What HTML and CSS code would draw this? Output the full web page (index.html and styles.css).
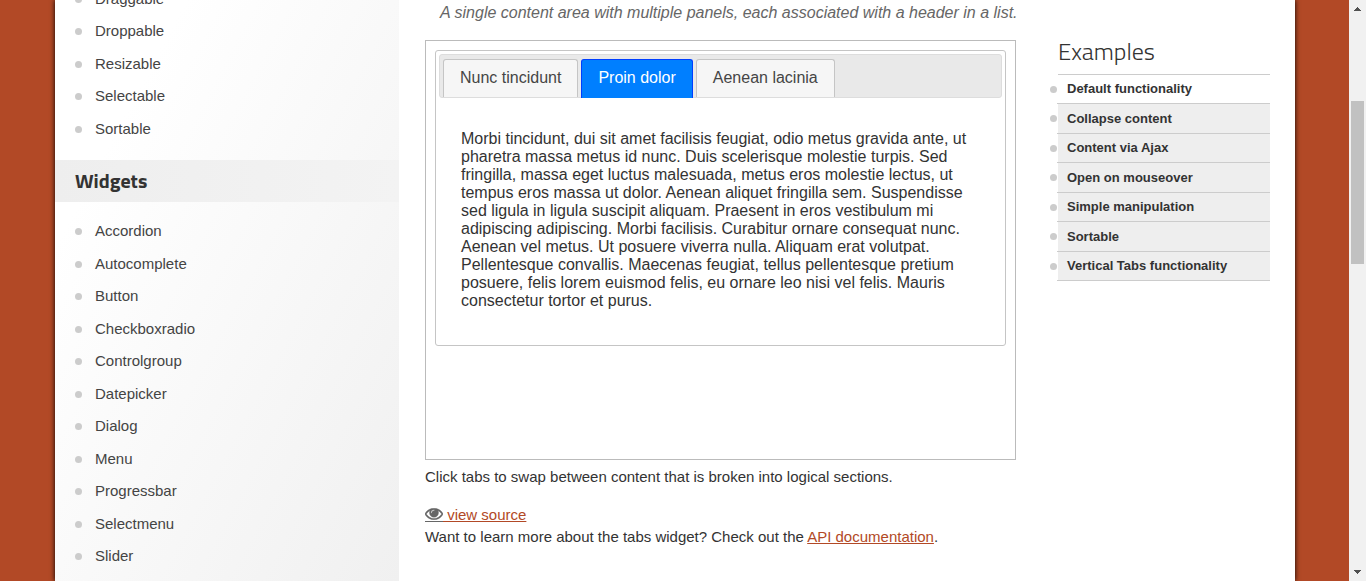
FILE: index.html
```html
<!DOCTYPE html>
<html lang="en">
<head>
<meta charset="utf-8">
<title>Tabs | jQuery UI</title>
<link rel="stylesheet" href="styles.css">
</head>
<body>
<div class="viewport">
  <div class="page">
    <nav class="sidebar" aria-label="Widgets and interactions">
      <ul class="menu menu-first">
        <li><a href="#">Draggable</a></li>
        <li><a href="#">Droppable</a></li>
        <li><a href="#">Resizable</a></li>
        <li><a href="#">Selectable</a></li>
        <li><a href="#">Sortable</a></li>
      </ul>
      <h3 class="menu-title">Widgets</h3>
      <ul class="menu">
        <li><a href="#">Accordion</a></li>
        <li><a href="#">Autocomplete</a></li>
        <li><a href="#">Button</a></li>
        <li><a href="#">Checkboxradio</a></li>
        <li><a href="#">Controlgroup</a></li>
        <li><a href="#">Datepicker</a></li>
        <li><a href="#">Dialog</a></li>
        <li><a href="#">Menu</a></li>
        <li><a href="#">Progressbar</a></li>
        <li><a href="#">Selectmenu</a></li>
        <li><a href="#">Slider</a></li>
      </ul>
    </nav>
    <div class="content">
      <main class="main">
        <p class="intro">A single content area with multiple panels, each associated with a header in a list.</p>
        <div class="demo">
          <div class="tabs">
            <div class="tab-list" role="tablist">
              <a class="tab" role="tab" href="#tab-1">Nunc tincidunt</a>
              <a class="tab tab-active" role="tab" aria-selected="true" href="#tab-2">Proin dolor</a>
              <a class="tab" role="tab" href="#tab-3">Aenean lacinia</a>
            </div>
            <div class="panel" role="tabpanel">
              <p>Morbi tincidunt, dui sit amet facilisis feugiat, odio metus gravida ante, ut pharetra massa metus id nunc. Duis scelerisque molestie turpis. Sed fringilla, massa eget luctus malesuada, metus eros molestie lectus, ut tempus eros massa ut dolor. Aenean aliquet fringilla sem. Suspendisse sed ligula in ligula suscipit aliquam. Praesent in eros vestibulum mi adipiscing adipiscing. Morbi facilisis. Curabitur ornare consequat nunc. Aenean vel metus. Ut posuere viverra nulla. Aliquam erat volutpat. Pellentesque convallis. Maecenas feugiat, tellus pellentesque pretium posuere, felis lorem euismod felis, eu ornare leo nisi vel felis. Mauris consectetur tortor et purus.</p>
            </div>
          </div>
        </div>
        <p class="description">Click tabs to swap between content that is broken into logical sections.</p>
        <div class="source"><a href="#"><span class="eye"><svg viewBox="0 384 1792 1152" aria-hidden="true"><path d="M1664 960q-152-236-381-353 61 104 61 225 0 185-131.500 316.500t-316.500 131.500-316.500-131.500-131.500-316.500q0-121 61-225-229 117-381 353 133 205 333.500 326.500t434.500 121.500 434.500-121.500 333.500-326.500zm-720-384q0-20-14-34t-34-14q-125 0-214.500 89.500t-89.500 214.500q0 20 14 34t34 14 34-14 14-34q0-86 61-147t147-61q20 0 34-14t14-34zm848 384q0 34-20 69-140 230-376.500 368.500t-499.500 138.500-499.500-139-376.500-368q-20-35-20-69t20-69q140-229 376.500-368t499.500-139 499.500 139 376.500 368q20 35 20 69z"/></svg></span> view source</a></div>
        <p class="more">Want to learn more about the tabs widget? Check out the <a href="#">API documentation</a>.</p>
      </main>
      <aside class="examples">
        <h2>Examples</h2>
        <ul>
          <li class="current"><a href="#">Default functionality</a></li>
          <li><a href="#">Collapse content</a></li>
          <li><a href="#">Content via Ajax</a></li>
          <li><a href="#">Open on mouseover</a></li>
          <li><a href="#">Simple manipulation</a></li>
          <li><a href="#">Sortable</a></li>
          <li><a href="#">Vertical Tabs functionality</a></li>
        </ul>
      </aside>
    </div>
  </div>
</div>
<div class="scrollbar" aria-hidden="true">
  <svg class="arrow" viewBox="0 0 17 17"><path d="M5 11h7v-1h-1v-1h-1v-1h-1v-1h-1v1h-1v1h-1v1h-1z"/></svg>
  <div class="track"><div class="thumb"></div></div>
  <svg class="arrow" viewBox="0 0 17 17"><path d="M5 6h7v1h-1v1h-1v1h-1v1h-1v-1h-1v-1h-1v-1h-1z"/></svg>
</div>
</body>
</html>
```
FILE: styles.css
```css
* {
  box-sizing: border-box;
}

body {
  margin: 0;
  display: flex;
  height: 100vh;
  overflow: hidden;
  background: #b24926;
  color: #333;
  font: 15px/22px "Liberation Sans", Arial, sans-serif;
}

p, ul, h2, h3 {
  margin: 0;
  padding: 0;
}

ul {
  list-style: none;
}

a {
  color: #b24926;
}

.viewport {
  flex: 1;
  min-width: 0;
  overflow: hidden;
  padding: 0 54px 0 55px;
}

.page {
  display: flex;
  min-height: 100%;
  max-width: 1240px;
  margin: 0 auto;
  background: #fff;
  box-shadow: 0 0 5px #000;
}

/* Sidebar */
.sidebar {
  width: 344px;
  flex: none;
  height: 100vh;
  overflow: hidden;
  background: linear-gradient(118deg, #fff 20%, #f0f0f0);
}

.menu {
  padding: 13px 20px;
}

.menu-first {
  margin-top: -18px;
  padding: 0 20px 15px;
}

.menu li {
  display: flex;
  align-items: center;
  gap: 13px;
  height: 33px;
}

.menu li:nth-child(odd),
.menu-first li:nth-child(even) {
  height: 32px;
}

.menu-first li:nth-child(odd) {
  height: 33px;
}

.menu li::before,
.examples li::before {
  content: "";
  flex: none;
  width: 7px;
  height: 7px;
  margin-top: 1px;
  border-radius: 50%;
  background: #ccc;
}

.menu a {
  color: #444;
  text-decoration: none;
}

.menu-title {
  padding: 0 20px;
  background: linear-gradient(90deg, #eee, #f3f3f3);
  color: #333;
  font: bold 20px/42px "Titillium Web", Roboto, sans-serif;
}

/* Content */
.content {
  flex: 1;
  min-width: 0;
  display: flex;
  align-items: flex-start;
  gap: 42px;
  padding: 0 25px 0 26px;
}

.main {
  flex: 1;
  min-width: 0;
}

.intro {
  margin-right: -30px;
  padding: 2px 0 16px 15px;
  color: #666;
  font-size: 16px;
  font-style: italic;
}

.demo {
  min-height: 420px;
  padding: 9px;
  border: 1px solid #bbb;
}

.tabs {
  padding: 3px;
  border: 1px solid #c5c5c5;
  border-radius: 3px;
  font-size: 16px;
  line-height: 18px;
}

.tab-list {
  display: flex;
  gap: 3px;
  height: 44px;
  padding: 4px 3px 0;
  border: 1px solid #ddd;
  border-radius: 3px;
  background: #e9e9e9;
}

.tab {
  padding: 9px 16px;
  border: 1px solid #c5c5c5;
  border-bottom: 0;
  border-radius: 3px 3px 0 0;
  background: #f6f6f6;
  color: #454545;
  text-decoration: none;
}

.tab-active {
  margin-bottom: -1px;
  border-color: #003eff;
  background: #007fff;
  color: #fff;
}

.panel {
  padding: 32px 22px;
}

.description {
  padding-top: 6px;
}

.source {
  padding-top: 16px;
}

.eye {
  display: inline-block;
  height: 14px;
  border-bottom: 1px solid #666;
  color: #666;
  line-height: 12px;
  vertical-align: -2px;
}

.eye svg {
  display: block;
  width: 18px;
  height: 12px;
  fill: currentColor;
  stroke: currentColor;
  stroke-width: 40px;
}

/* Examples */
.examples {
  width: 212px;
  flex: none;
  padding-top: 36px;
}

.examples h2 {
  padding-bottom: 8px;
  border-bottom: 1px solid #ccc;
  font: 300 24px/30px "Titillium Web", Roboto, sans-serif;
}

.examples li {
  display: flex;
  align-items: center;
  gap: 10px;
  height: 30px;
  margin-left: -8px;
  font-size: 13px;
  font-weight: bold;
  background: linear-gradient(#eee, #eee) 8px 0 no-repeat;
  border-image: linear-gradient(90deg, transparent 8px, #ccc 8px) 1;
  border-bottom: 1px solid;
}

.examples li:nth-child(odd) {
  height: 29px;
}

.examples li::before {
  margin-top: 0;
}

.examples .current {
  background: none;
}

.examples a {
  color: #333;
  text-decoration: none;
}

/* Scrollbar */
.scrollbar {
  display: flex;
  flex-direction: column;
  flex: none;
  width: 17px;
  background: #f1f1f1;
}

.arrow {
  width: 17px;
  height: 17px;
  fill: #505050;
}

.track {
  flex: 1;
  padding: 84px 2px 0;
}

.thumb {
  height: 163px;
  background: #c1c1c1;
}
```
